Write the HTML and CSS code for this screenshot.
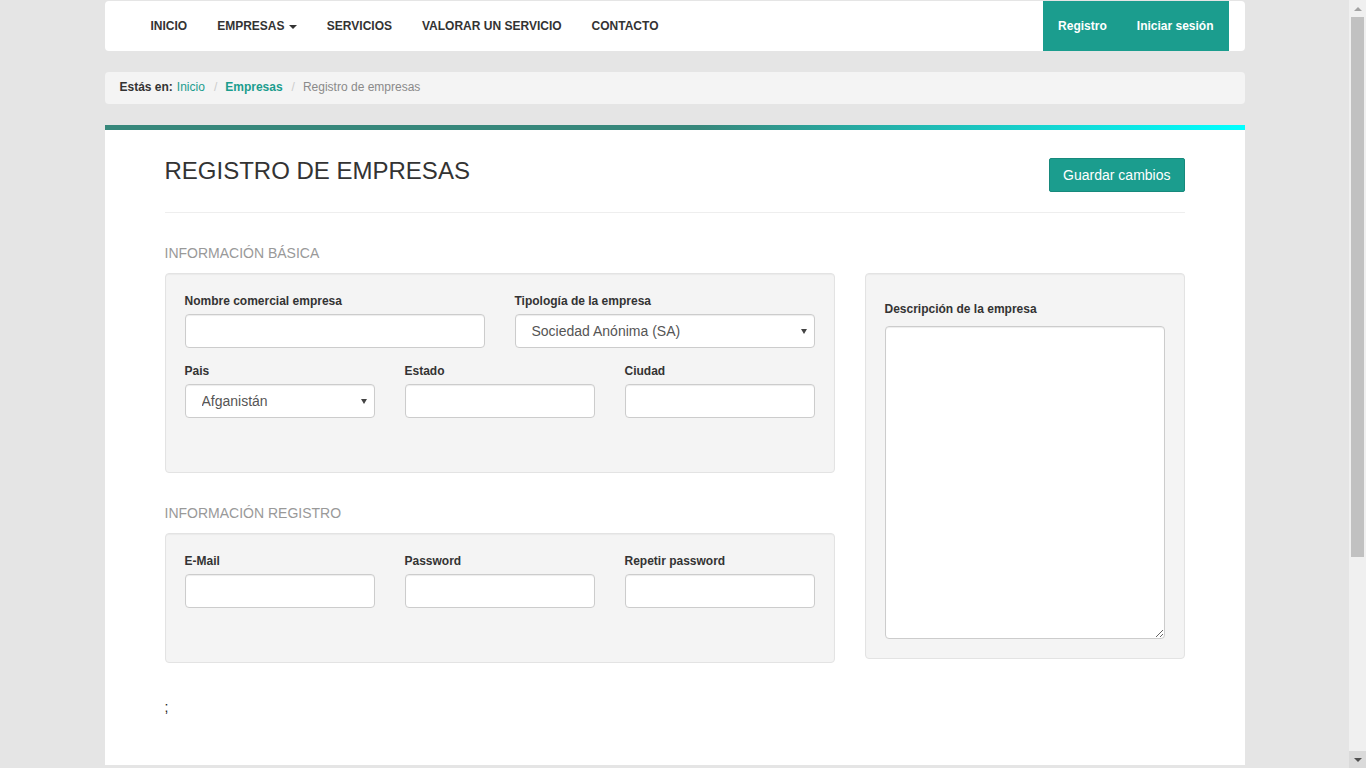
FILE: index.html
```html
<!DOCTYPE html>
<html lang="es">
<head>
<meta charset="utf-8">
<title>Registro de empresas</title>
<link rel="stylesheet" href="styles.css">
</head>
<body>
<div class="container">
  <nav class="navbar">
    <ul class="nav-main">
      <li><a href="#">Inicio</a></li>
      <li><a href="#">Empresas <span class="caret"></span></a></li>
      <li><a href="#">Servicios</a></li>
      <li><a href="#">Valorar un servicio</a></li>
      <li><a href="#">Contacto</a></li>
    </ul>
    <ul class="nav-user">
      <li><a href="#">Registro</a></li>
      <li><a href="#">Iniciar sesión</a></li>
    </ul>
  </nav>

  <ol class="breadcrumb">
    <li class="bc-label">Estás en:</li>
    <li><a class="bc-link" href="#">Inicio</a></li>
    <li class="bc-sep">/</li>
    <li><a class="bc-link bc-strong" href="#">Empresas</a></li>
    <li class="bc-sep">/</li>
    <li class="bc-current">Registro de empresas</li>
  </ol>

  <main class="panel">
    <div class="panel-head">
      <h1 class="panel-title">REGISTRO DE EMPRESAS</h1>
      <button class="btn-save" type="button">Guardar cambios</button>
    </div>
    <hr class="divider">

    <div class="form-grid">
      <div class="col-left">
        <h2 class="section-title">Información básica</h2>
        <div class="well">
          <div class="row row-2">
            <div class="form-group">
              <label class="field-label">Nombre comercial empresa</label>
              <input class="form-control" type="text">
            </div>
            <div class="form-group">
              <label class="field-label">Tipología de la empresa</label>
              <div class="select-wrap">
                <select class="form-control">
                  <option>Sociedad Anónima (SA)</option>
                </select>
              </div>
            </div>
          </div>
          <div class="row row-3">
            <div class="form-group">
              <label class="field-label">Pais</label>
              <div class="select-wrap">
                <select class="form-control">
                  <option>Afganistán</option>
                </select>
              </div>
            </div>
            <div class="form-group">
              <label class="field-label">Estado</label>
              <input class="form-control" type="text">
            </div>
            <div class="form-group">
              <label class="field-label">Ciudad</label>
              <input class="form-control" type="text">
            </div>
          </div>
        </div>

        <h2 class="section-title">Información registro</h2>
        <div class="well">
          <div class="row row-3">
            <div class="form-group">
              <label class="field-label">E-Mail</label>
              <input class="form-control" type="email">
            </div>
            <div class="form-group">
              <label class="field-label">Password</label>
              <input class="form-control" type="password">
            </div>
            <div class="form-group">
              <label class="field-label">Repetir password</label>
              <input class="form-control" type="password">
            </div>
          </div>
        </div>
      </div>

      <div class="col-right">
        <div class="well well-desc">
          <label class="field-label desc-label">Descripción de la empresa</label>
          <textarea class="form-control desc-area"></textarea>
        </div>
      </div>
    </div>

    <p class="trailing">;</p>
  </main>
</div>

<div class="scrollbar" aria-hidden="true">
  <div class="sb-btn sb-up"><span class="sb-arrow-up"></span></div>
  <div class="sb-track"><div class="sb-thumb"></div></div>
  <div class="sb-btn sb-down"><span class="sb-arrow-down"></span></div>
</div>
</body>
</html>
```

FILE: styles.css
```css
* {
  box-sizing: border-box;
}

html {
  background: #e5e5e5;
}

body {
  margin: 0;
  padding: 0 17px 279px 0;
  font-family: "Liberation Sans", Arial, Helvetica, sans-serif;
  font-size: 14px;
  line-height: 1.42857;
  color: #333;
  background: #e5e5e5;
}

.container {
  width: 1140px;
  margin: 0 auto;
}

/* Navbar */
.navbar {
  margin-top: 1px;
  height: 50px;
  background: #fff;
  border-radius: 4px;
  display: flex;
  justify-content: space-between;
}

.nav-main,
.nav-user {
  list-style: none;
  margin: 0;
  padding: 0;
  display: flex;
}

.nav-main {
  padding-left: 31px;
}

.nav-main a,
.nav-user a {
  display: block;
  padding: 0 15px;
  line-height: 50px;
  font-size: 12px;
  font-weight: bold;
  text-decoration: none;
}

.nav-main a {
  color: #333;
  text-transform: uppercase;
}

.caret {
  display: inline-block;
  width: 0;
  height: 0;
  margin-left: 1px;
  vertical-align: middle;
  border-top: 4px solid #333;
  border-left: 4px solid transparent;
  border-right: 4px solid transparent;
}

.nav-user {
  background: #1b9d8e;
  margin-right: 16px;
}

.nav-user a {
  color: #fff;
}

/* Breadcrumb */
.breadcrumb {
  list-style: none;
  margin: 21px 0 0;
  padding: 0 15px;
  height: 32px;
  display: flex;
  align-items: center;
  background: #f4f4f4;
  border-radius: 4px;
  font-size: 12px;
}

.bc-label {
  font-weight: bold;
  color: #333;
  margin-right: 4px;
}

.bc-link {
  color: #1b9d8e;
  text-decoration: none;
}

.bc-strong {
  font-weight: bold;
}

.bc-sep {
  color: #ccc;
  padding: 0 8px 0 9px;
}

.bc-current {
  color: #8a8a8a;
}

/* Panel */
.panel {
  display: block;
  margin-top: 21px;
  padding: 5px 60px 48px;
  background:
    linear-gradient(to right, #37877b 52%, #00ffff 99.5%) top left / 100% 5px no-repeat,
    #fff;
}

.panel-head {
  display: flex;
  justify-content: space-between;
  align-items: flex-start;
  padding-top: 25px;
}

.panel-title {
  margin: 3px 0 0;
  font-size: 24px;
  line-height: 26px;
  font-weight: normal;
  color: #333;
}

.btn-save {
  margin-top: 3px;
  height: 34px;
  padding: 6px 13px;
  font-family: inherit;
  font-size: 14px;
  line-height: 20px;
  color: #fff;
  background: #1b9d8e;
  border: 1px solid #17897c;
  border-radius: 2px;
  cursor: pointer;
}

.divider {
  margin: 20px 0 0;
  border: 0;
  border-top: 1px solid #eee;
  height: 0;
}

/* Form */
.form-grid {
  display: grid;
  grid-template-columns: 670px 320px;
  column-gap: 30px;
  align-items: start;
}

.section-title {
  margin: 30px 0 10px;
  font-size: 14px;
  line-height: 20px;
  font-weight: normal;
  color: #999;
  text-transform: uppercase;
}

.col-right {
  margin-top: 60px;
}

.well {
  background: #f4f4f4;
  border: 1px solid #e3e3e3;
  border-radius: 4px;
  box-shadow: inset 0 1px 1px rgba(0, 0, 0, 0.04);
  padding: 19px 19px 39px;
}

.row {
  display: grid;
  column-gap: 30px;
}

.row-2 {
  grid-template-columns: 1fr 1fr;
}

.row-3 {
  grid-template-columns: 1fr 1fr 1fr;
}

.form-group {
  margin-bottom: 15px;
}

.field-label {
  display: block;
  font-size: 12px;
  line-height: 17px;
  font-weight: bold;
  color: #333;
  margin-bottom: 4px;
}

.form-control {
  display: block;
  width: 100%;
  height: 34px;
  padding: 6px 16px;
  font-family: inherit;
  font-size: 14px;
  line-height: 20px;
  color: #555;
  background: #fff;
  border: 1px solid #ccc;
  border-radius: 4px;
  box-shadow: inset 0 1px 1px rgba(0, 0, 0, 0.075);
  outline: none;
}

select.form-control {
  -webkit-appearance: none;
  appearance: none;
}

.select-wrap {
  position: relative;
}

.select-wrap::after {
  content: "";
  position: absolute;
  right: 8px;
  top: 15px;
  width: 0;
  height: 0;
  border-top: 5px solid #444;
  border-left: 3px solid transparent;
  border-right: 3px solid transparent;
  pointer-events: none;
}

.well-desc {
  padding: 27px 19px 19px;
}

.desc-label {
  margin-bottom: 8px;
}

.desc-area {
  height: 313px;
  resize: vertical;
}

.trailing {
  margin: 34px 0 0;
  font-size: 14px;
  line-height: 20px;
  color: #222;
}

/* Window scrollbar (drawn over the page edge) */
.scrollbar {
  position: fixed;
  top: 0;
  right: 0;
  width: 17px;
  height: 100vh;
  background: #f0f0f0;
  display: flex;
  flex-direction: column;
}

.sb-btn {
  height: 17px;
  display: flex;
  align-items: center;
  justify-content: center;
}

.sb-down {
  background: #dadada;
}

.sb-arrow-up,
.sb-arrow-down {
  width: 0;
  height: 0;
  border-left: 4px solid transparent;
  border-right: 4px solid transparent;
}

.sb-arrow-up {
  border-bottom: 4px solid #a3a3a3;
}

.sb-arrow-down {
  border-top: 4px solid #505050;
}

.sb-track {
  flex: 1;
  padding: 0 2px;
}

.sb-thumb {
  height: 540px;
  background: #c1c1c1;
}
```
